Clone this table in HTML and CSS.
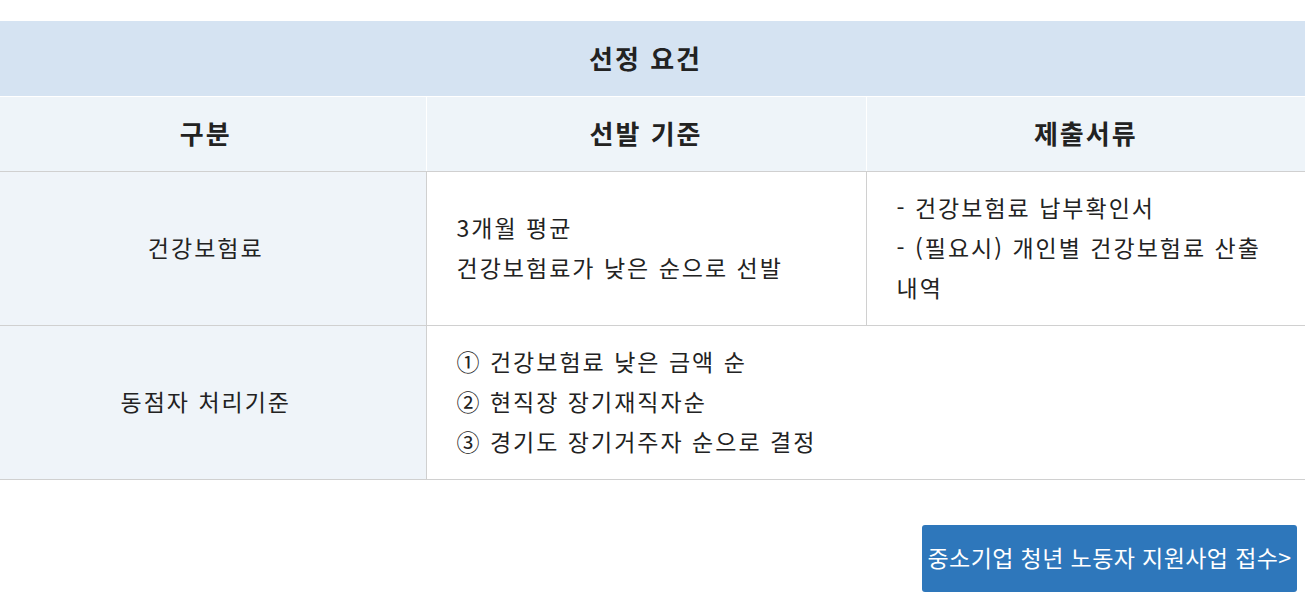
FILE: index.html
```html
<!DOCTYPE html>
<html lang="ko">
<head>
<meta charset="utf-8">
<title>선정 요건</title>
<link rel="stylesheet" href="styles.css">
</head>
<body>
<div class="page">
  <table class="req">
    <colgroup>
      <col class="c1">
      <col class="c2">
      <col class="c3">
    </colgroup>
    <thead>
      <tr class="title-row"><th colspan="3">선정 요건</th></tr>
      <tr class="head-row"><th class="first">구분</th><th>선발 기준</th><th>제출서류</th></tr>
    </thead>
    <tbody>
      <tr>
        <td class="label">건강보험료</td>
        <td class="text">3개월 평균<br>건강보험료가 낮은 순으로 선발</td>
        <td class="text">- 건강보험료 납부확인서<br>- (필요시) 개인별 건강보험료 산출 내역</td>
      </tr>
      <tr>
        <td class="label">동점자 처리기준</td>
        <td class="text" colspan="2">① 건강보험료 낮은 금액 순<br>② 현직장 장기재직자순<br>③ 경기도 장기거주자 순으로 결정</td>
      </tr>
    </tbody>
  </table>
  <div class="actions">
    <a class="btn" href="#">중소기업 청년 노동자 지원사업 접수&gt;</a>
  </div>
</div>
</body>
</html>
```

FILE: styles.css
```css
html, body {
  margin: 0;
  padding: 0;
  background: #fff;
}
body {
  font-family: "Noto Sans CJK KR", "Noto Sans", sans-serif;
  color: #222;
}
.page {
  width: 1305px;
  padding-top: 21px;
}
.req {
  width: 1305px;
  border-collapse: collapse;
  table-layout: fixed;
}
.c1 { width: 426px; }
.c2 { width: 440px; }
.c3 { width: 439px; }

.title-row th {
  background: #d5e3f2;
  height: 72px;
  padding: 0 14px 3px 0;
  font-size: 26px;
  font-weight: 700;
  letter-spacing: 2px;
  color: #222;
  border-bottom: 1px solid #fff;
}
.head-row th {
  background: #eef4f9;
  height: 71px;
  padding: 0 0 3px;
  font-size: 26px;
  font-weight: 700;
  letter-spacing: 2px;
  color: #222;
  border-left: 1px solid #fff;
  border-bottom: 1px solid #d0d0d0;
}
.head-row th.first {
  border-left: none;
  padding-right: 14px;
}

tbody td {
  border-bottom: 1px solid #d0d0d0;
  border-left: 1px solid #d0d0d0;
  font-size: 23px;
  letter-spacing: 2px;
  line-height: 40px;
  height: 150px;
  padding: 0 28px 3px 30px;
  vertical-align: middle;
}
tbody td.label {
  background: #eff4f9;
  text-align: center;
  border-left: none;
  padding: 0 14px 3px 0;
}
tbody td.text {
  text-align: left;
}

.actions {
  display: flex;
  justify-content: flex-end;
  padding: 45px 8px 0 0;
}
.btn {
  display: block;
  box-sizing: border-box;
  width: 375px;
  height: 67px;
  line-height: 65px;
  background: #2e77bb;
  color: #fff;
  text-decoration: none;
  font-size: 23px;
  text-align: center;
  border-radius: 3px;
  white-space: nowrap;
  letter-spacing: 0.4px;
}
```
